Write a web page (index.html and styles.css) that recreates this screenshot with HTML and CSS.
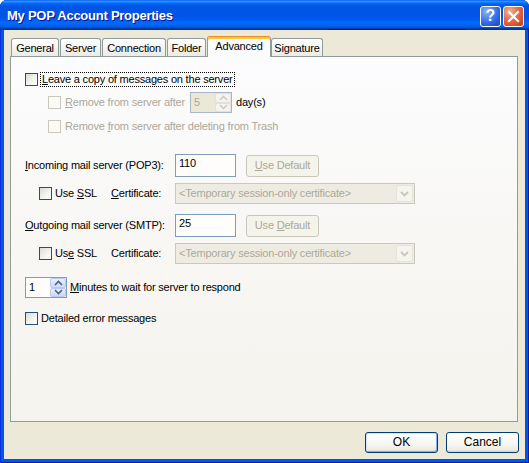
FILE: index.html
```html
<!DOCTYPE html>
<html>
<head>
<meta charset="utf-8">
<title>My POP Account Properties</title>
<link rel="stylesheet" href="styles.css">
</head>
<body>
<div class="window">
  <div class="titlebar">
    <span class="title">My POP Account Properties</span>
    <div class="tb-buttons">
      <div class="tb-btn help">?</div>
      <div class="tb-btn close">
        <svg width="13" height="13" viewBox="0 0 13 13"><path d="M2 2 L11 11 M11 2 L2 11" stroke="#fff" stroke-width="2.2" stroke-linecap="square" fill="none"/></svg>
      </div>
    </div>
  </div>
  <div class="client">
    <div class="tabs">
      <div class="tab t1">General</div>
      <div class="tab t2">Server</div>
      <div class="tab t3">Connection</div>
      <div class="tab t4">Folder</div>
      <div class="tab t5 sel">Advanced</div>
      <div class="tab t6">Signature</div>
    </div>
    <div class="panel">
      <div class="row r1">
        <span class="cb"></span>
        <span class="lbl focus"><u>L</u>eave a copy of messages on the server</span>
      </div>
      <div class="row r2 indent2">
        <span class="cb dis"></span>
        <span class="lbl dis w-remove"><u>R</u>emove from server after</span>
        <div class="spin dis">
          <span class="val">5</span>
          <div class="sbtns">
            <span class="sbtn"><svg width="9" height="6" viewBox="0 0 9 6"><path d="M1 5 L4.5 1.5 L8 5" stroke="#CFCCC0" stroke-width="1.6" fill="none"/></svg></span>
            <span class="sbtn"><svg width="9" height="6" viewBox="0 0 9 6"><path d="M1 1 L4.5 4.5 L8 1" stroke="#CFCCC0" stroke-width="1.6" fill="none"/></svg></span>
          </div>
        </div>
        <span class="lbl days">day(s)</span>
      </div>
      <div class="row r3 indent2">
        <span class="cb dis"></span>
        <span class="lbl dis">Remove <u>f</u>rom server after deleting from Trash</span>
      </div>
      <div class="row r4">
        <span class="lbl field"><u>I</u>ncoming mail server (POP3):</span>
        <div class="edit">110</div>
        <div class="btn-dis"><span><u>U</u>se Default</span></div>
      </div>
      <div class="row r5">
        <div class="ssl">
          <span class="cb"></span>
          <span class="lbl">Use <u>S</u>SL</span>
        </div>
        <span class="lbl cert"><u>C</u>ertificate:</span>
        <div class="combo">
          <span class="ctext">&lt;Temporary session-only certificate&gt;</span>
          <span class="cbtn"><svg width="9" height="6" viewBox="0 0 9 6"><path d="M1 1 L4.5 4.5 L8 1" stroke="#C9C7BA" stroke-width="1.8" fill="none"/></svg></span>
        </div>
      </div>
      <div class="row r6">
        <span class="lbl field"><u>O</u>utgoing mail server (SMTP):</span>
        <div class="edit">25</div>
        <div class="btn-dis"><span>Use <u>D</u>efault</span></div>
      </div>
      <div class="row r7">
        <div class="ssl">
          <span class="cb"></span>
          <span class="lbl">Us<u>e</u> SSL</span>
        </div>
        <span class="lbl cert">Certificate:</span>
        <div class="combo">
          <span class="ctext">&lt;Temporary session-only certificate&gt;</span>
          <span class="cbtn"><svg width="9" height="6" viewBox="0 0 9 6"><path d="M1 1 L4.5 4.5 L8 1" stroke="#C9C7BA" stroke-width="1.8" fill="none"/></svg></span>
        </div>
      </div>
      <div class="row r8">
        <div class="spin">
          <span class="val">1</span>
          <div class="sbtns">
            <span class="sbtn"><svg width="9" height="6" viewBox="0 0 9 6"><path d="M1 5 L4.5 1.5 L8 5" stroke="#4D6185" stroke-width="1.6" fill="none"/></svg></span>
            <span class="sbtn"><svg width="9" height="6" viewBox="0 0 9 6"><path d="M1 1 L4.5 4.5 L8 1" stroke="#4D6185" stroke-width="1.6" fill="none"/></svg></span>
          </div>
        </div>
        <span class="lbl minutes"><u>M</u>inutes to wait for server to respond</span>
      </div>
      <div class="row r9">
        <span class="cb"></span>
        <span class="lbl detail">Detailed error messages</span>
      </div>
    </div>
    <div class="buttons">
      <div class="btn default">OK</div>
      <div class="btn">Cancel</div>
    </div>
  </div>
</div>
</body>
</html>
```
FILE: styles.css
```css
* { box-sizing: border-box; }
html, body { margin: 0; padding: 0; background: #ffffff; }
body {
  font-family: "Liberation Sans", Arial, sans-serif;
  font-size: 11px;
  letter-spacing: -0.2px;
  line-height: 13px;
  color: #000;
}
u { text-decoration: underline; text-underline-offset: 1px; }

.window {
  width: 529px;
  height: 463px;
  display: flex;
  flex-direction: column;
  background: #0055EA;
  border-radius: 7px 7px 0 0;
  overflow: hidden;
  box-shadow: inset 1px 0 #0831D9, inset -1px 0 #001EA0, inset 0 -1px #001EA0;
}

.titlebar {
  position: relative;
  height: 30px;
  flex: none;
  display: flex;
  align-items: center;
  padding: 0 5px 0 7px;
  background: linear-gradient(to bottom, #0058EE 0%, #3A93FF 4%, #288EFF 6%, #127DFF 8%, #036FFC 10%, #0262EE 14%, #0057E5 20%, #0054E3 24%, #0055EB 56%, #005BF5 66%, #026AFE 76%, #0062EF 86%, #0052D6 92%, #0040AB 94%, #003092 100%);
}
.titlebar::after {
  content: "";
  position: absolute;
  left: 328px;
  top: 29px;
  width: 137px;
  height: 1px;
  background: #0B1A55;
}
.title {
  flex: 1;
  font-weight: bold;
  font-size: 13px;
  letter-spacing: -0.25px;
  color: #ffffff;
  text-shadow: 1px 1px #0F1089;
  padding-top: 1px;
}
.tb-buttons { display: flex; gap: 2px; margin-top: 2px; }
.tb-btn {
  width: 21px;
  height: 21px;
  border: 1px solid #ffffff;
  border-radius: 3px;
  display: flex;
  align-items: center;
  justify-content: center;
}
.help {
  background: radial-gradient(circle at 30% 25%, #8DB2FB 0%, #4A7EF0 40%, #2458D8 75%, #1B4CC4 100%);
  color: #ffffff;
  font-weight: bold;
  font-size: 16px;
  letter-spacing: 0;
  line-height: 18px;
}
.close {
  background: radial-gradient(circle at 30% 25%, #F6B39A 0%, #E8704A 40%, #DB4D26 75%, #C9391A 100%);
}

.client {
  flex: 1;
  margin: 0 4px 4px 4px;
  background: #ECE9D8;
  display: flex;
  flex-direction: column;
}

.tabs {
  margin: 6px 0 0 7px;
  height: 20px;
  display: flex;
  align-items: flex-end;
  gap: 1px;
}
.tab {
  position: relative;
  height: 18px;
  border: 1px solid #919B9C;
  border-bottom: none;
  border-radius: 3px 3px 0 0;
  background: linear-gradient(to bottom, #FFFFFF 0%, #F7F7F4 40%, #ECEBE5 100%);
  display: flex;
  align-items: center;
  justify-content: center;
  padding-top: 1px;
}
.t1 { width: 48px; }
.t2 { width: 41px; }
.t3 { width: 64px; }
.t4 { width: 39px; }
.t5 { width: 64px; margin-right: -1px; }
.t6 { width: 52px; }
.tab.sel {
  z-index: 1;
  height: 21px;
  margin-bottom: -1px;
  border-top: 1px solid #E68B2C;
  box-shadow: inset 0 2px 0 #FFC73C;
  background: #FCFCFE;
  padding-top: 0;
  padding-bottom: 2px;
}

.panel {
  margin-left: 6px;
  width: 508px;
  height: 366px;
  flex: none;
  border: 1px solid #919B9C;
  background: linear-gradient(to bottom, #FCFCFE 0%, #F8F7F4 50%, #F4F3EE 100%);
  padding: 16px 0 0 14px;
  display: flex;
  flex-direction: column;
}

.row { display: flex; align-items: center; flex: none; }
.r1 { height: 13px; }
.r2 { height: 21px; margin-top: 6px; }
.r3 { height: 13px; margin-top: 7px; }
.r4 { height: 23px; margin-top: 21px; }
.r5 { height: 21px; margin-top: 6px; }
.r6 { height: 23px; margin-top: 10px; }
.r7 { height: 21px; margin-top: 6px; }
.r8 { height: 21px; margin-top: 13px; }
.r9 { height: 13px; margin-top: 14px; }
.indent2 { padding-left: 23px; }

.cb {
  width: 13px;
  height: 13px;
  flex: none;
  border: 1px solid #1C5180;
  background: linear-gradient(135deg, #DCDCD7 0%, #F4F4F0 60%, #FFFFFF 100%);
}
.cb.dis {
  border-color: #CAC8BB;
  background: #FBFAF7;
}
.lbl { white-space: nowrap; }
.lbl.dis { color: #ACA899; }
.r1 .lbl, .r2 > .lbl.dis, .r3 .lbl { margin-left: 4px; }
.focus {
  margin-left: 2px !important;
  padding: 0 1px;
  border: 1px dotted #000;
}
.w-remove { width: 125px; }
.days { margin-left: 4px; }
.field { width: 150px; }
.ssl { width: 72px; margin-left: 14px; display: flex; align-items: center; }
.ssl .lbl { margin-left: 3px; }
.cert { width: 64px; }
.minutes { margin-left: 3px; }
.detail { margin-left: 3px; }

.edit {
  width: 61px;
  height: 23px;
  border: 1px solid #7F9DB9;
  background: #FFFCFC;
  padding: 2px 0 0 3px;
}
.btn-dis {
  margin-left: 10px;
  width: 73px;
  height: 22px;
  border: 1px solid #C9C7BA;
  border-radius: 3px;
  background: #F5F4EA;
  color: #ACA899;
  display: flex;
  align-items: center;
  justify-content: center;
}

.combo {
  width: 240px;
  height: 21px;
  border: 1px solid #CBC8BC;
  background: #EEECE2;
  display: flex;
  align-items: center;
  padding: 1px;
}
.ctext { flex: 1; color: #ACA899; padding-left: 2px; }
.cbtn {
  width: 17px;
  height: 17px;
  border: 1px solid #E6E4DA;
  border-radius: 2px;
  background: #F5F4EF;
  display: flex;
  align-items: center;
  justify-content: center;
}

.spin {
  width: 42px;
  height: 21px;
  border: 1px solid #7F9DB9;
  background: #FFFCFC;
  display: flex;
}
.spin .val { flex: 1; padding: 3px 0 0 3px; }
.sbtns { width: 16px; display: flex; flex-direction: column; }
.sbtn {
  flex: 1;
  border: 1px solid #B7C9F1;
  border-radius: 2px;
  background: linear-gradient(to bottom, #E8EFFD 0%, #CBD9F9 100%);
  display: flex;
  align-items: center;
  justify-content: center;
}
.spin.dis { border-color: #A7B6CB; background: #EBE8D8; }
.spin.dis .val { color: #ACA899; }
.spin.dis .sbtn { border-color: #E4E2D8; background: #F4F3EE; }

.buttons {
  margin-top: 10px;
  display: flex;
  justify-content: flex-end;
  gap: 8px;
  padding-right: 6px;
}
.btn {
  width: 73px;
  height: 21px;
  border: 1px solid #003C74;
  border-radius: 3px;
  background: linear-gradient(to bottom, #FFFFFF 0%, #F6F6F2 60%, #ECEBE6 88%, #D6D0C5 100%);
  display: flex;
  align-items: center;
  justify-content: center;
  font-size: 12px;
  letter-spacing: 0;
}
.btn.default {
  box-shadow: inset 1px 1px 0 #CEE7FF, inset -1px -1px 0 #89ADE4;
}
```
